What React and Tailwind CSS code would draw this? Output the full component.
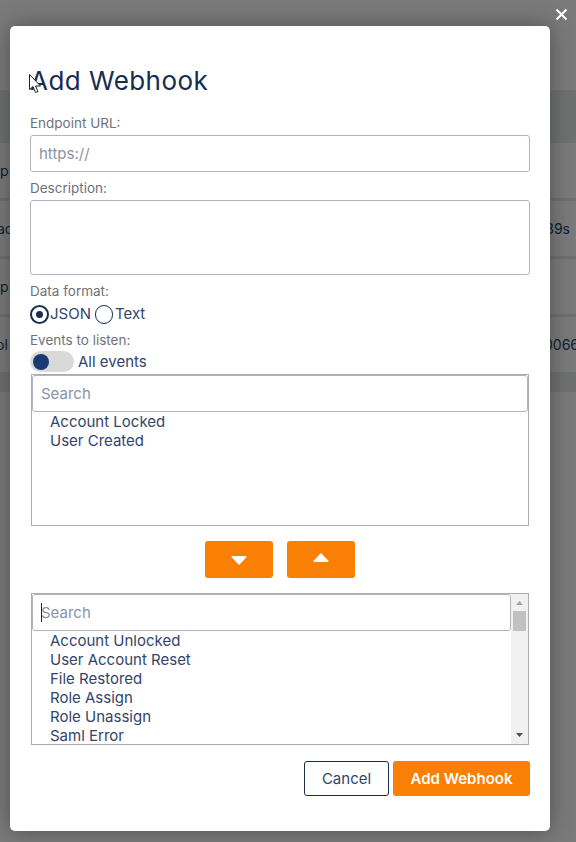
import React from "react";

const font = { fontFamily: "Inter, 'Liberation Sans', sans-serif" };

function BgRow({ left, leftClass, right, rightClass }) {
  return (
    <div className="flex h-[58px] items-center justify-between border-b-[3px] border-[#6e6f6f] text-[14px] text-[#0c2233]">
      <span className={leftClass}>{left}</span>
      <span className={rightClass}>{right}</span>
    </div>
  );
}

function Field({ label, children }) {
  return (
    <div className="flex flex-col">
      <label className="text-[13.5px] leading-[17px] text-[#6f7278]">{label}</label>
      {children}
    </div>
  );
}

function ListBox({ items, focused }) {
  return (
    <div className="flex h-[152px] border border-[#adadad] overflow-hidden">
      <div className="flex-1 min-w-0 flex flex-col">
        <div className="relative">
          <input
            readOnly
            placeholder="Search"
            className="w-full h-[37px] rounded-[3px] border border-[#b1b4bf] px-2 text-[15px] outline-none placeholder:text-[#8a93a6] bg-white"
          />
          {focused && <span className="absolute left-[9px] top-[9px] h-[19px] w-px bg-[#0f2a4a]" />}
        </div>
        <ul className="pl-[18px] text-[15px] leading-[19px] text-[#33456a]">
          {items.map((t) => (
            <li key={t}>{t}</li>
          ))}
        </ul>
      </div>
      {focused && (
        <div className="flex w-[17px] shrink-0 flex-col items-center bg-[#f0f0f0] pt-[7px] pb-[7px]">
          <svg width="7" height="4" viewBox="0 0 7 4" className="shrink-0">
            <path d="M3.500 0 7 4H0z" fill="#a3a3a3" />
          </svg>
          <div className="mt-[6px] h-[20px] w-[13px] bg-[#c1c1c1]" />
          <div className="flex-1" />
          <svg width="7" height="4" viewBox="0 0 7 4" className="shrink-0">
            <path d="M0 0h7L3.500 4z" fill="#505050" />
          </svg>
        </div>
      )}
    </div>
  );
}

function ArrowBtn({ up }) {
  return (
    <button className="flex h-[37px] w-[68px] items-center justify-center rounded-[3px] bg-[#fa8005]">
      <svg width="16" height="13" viewBox="0 0 16 13">
        <path
          d={
            up
              ? "M8 0 15.200 7.400Q16 9 14.500 9H1.500Q0 9 .8 7.400z"
              : "M8 12 .8 4.600Q0 3 1.500 3H14.500Q16 3 15.200 4.600z"
          }
          fill="#fff"
        />
      </svg>
    </button>
  );
}

export default function App() {
  return (
    <div className="relative h-[842px] w-[576px] overflow-hidden bg-[#7a7a7a]" style={font}>
      {/* dimmed page behind the dialog */}
      <div className="pt-[90px]">
        <div className="h-[53px] bg-[#6f7171]" />
        <BgRow left="p" />
        <BgRow left="ac" leftClass="-ml-[3px]" right="39s" rightClass="mr-[6px]" />
        <BgRow left="p" />
        <BgRow left="ol" leftClass="-ml-[4px]" right="0066" rightClass="-mr-[3px]" />
        <div className="h-[17px] bg-[#6f7171]" />
      </div>

      {/* close */}
      <svg className="absolute left-[555px] top-[8px]" width="13" height="13" viewBox="0 0 13 13">
        <path d="M1.500 1.500 11.500 11.500M11.500 1.500 1.500 11.500" stroke="#fff" strokeWidth="2" />
      </svg>

      {/* dialog */}
      <div className="absolute left-[10px] top-[26px] flex h-[805px] w-[540px] flex-col rounded-[5px] bg-white px-5 pt-[37px] shadow-[0_0_22px_rgba(0,0,0,0.35)]">
        <h1 className="h-[36px] text-[26px] font-normal leading-[36px] tracking-[0.45px] text-[#182c4e]">Add Webhook</h1>

        <div className="mt-[16px]">
          <Field label="Endpoint URL:">
            <input
              readOnly
              placeholder="https://"
              className="mt-[3px] h-[37px] w-full rounded-[3px] border border-[#b1b4bf] px-2 text-[15px] outline-none placeholder:text-[#8a93a6]"
            />
          </Field>
        </div>

        <div className="mt-[8px]">
          <Field label="Description:">
            <textarea
              readOnly
              className="mt-[3px] block h-[75px] w-full resize-none rounded-[3px] border border-[#b1b4bf] outline-none"
            />
          </Field>
        </div>

        <div className="mt-[8px]">
          <Field label="Data format:">
            <div className="mt-[4px] flex h-[20px] items-center text-[15px] text-[#33456a]">
              <span className="flex h-[19px] w-[19px] items-center justify-center rounded-full border-2 border-[#182c4e]">
                <span className="h-[7px] w-[7px] rounded-full bg-[#182c4e]" />
              </span>
              <span className="ml-[1px]">JSON</span>
              <span className="ml-[4px] h-[19px] w-[18px] rounded-full border border-[#182c4e]" />
              <span className="ml-[2px]">Text</span>
            </div>
          </Field>
        </div>

        <div className="mt-[8px]">
          <Field label="Events to listen:">
            <div className="mt-[2px] flex h-[23px] items-start text-[15px] leading-[21px] text-[#33456a]">
              <span className="flex h-[21px] w-[44px] items-center rounded-full bg-[#d9d9d9] pl-[3px]">
                <span className="h-[16px] w-[16px] rounded-full bg-[#183b73]" />
              </span>
              <span className="ml-[4px]">All events</span>
            </div>
          </Field>
        </div>

        <div className="ml-px mr-px">
          <ListBox items={["Account Locked", "User Created"]} />
        </div>

        <div className="mt-[15px] flex justify-center gap-[14px]">
          <ArrowBtn />
          <ArrowBtn up />
        </div>

        <div className="ml-px mr-px mt-[15px]">
          <ListBox
            focused
            items={["Account Unlocked", "User Account Reset", "File Restored", "Role Assign", "Role Unassign", "Saml Error"]}
          />
        </div>

        <div className="mt-[16px] flex justify-end gap-[4px]">
          <button className="h-[35px] w-[85px] rounded-[3px] border border-[#182c4e] bg-white pt-px text-[15px] text-[#33456a]">Cancel</button>
          <button className="h-[35px] w-[137px] rounded-[3px] bg-[#fa8005] pt-px text-[15px] font-semibold text-white">Add Webhook</button>
        </div>
      </div>

      {/* mouse pointer */}
      <svg className="absolute left-[29px] top-[74px]" width="13" height="20" viewBox="0 0 13 20">
        <path d="M.5.5V15.500L4 12.500 6.500 18.500 9 17.500 6.500 12H11.500z" fill="#fff" stroke="#222" strokeWidth="1" />
      </svg>
    </div>
  );
}
